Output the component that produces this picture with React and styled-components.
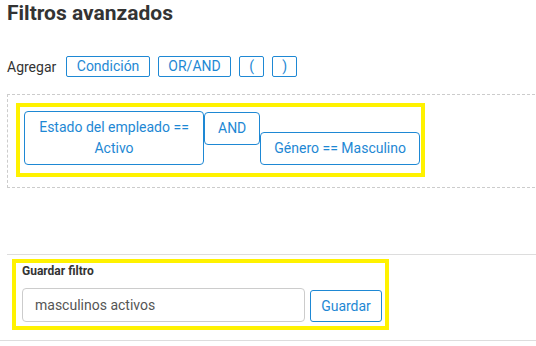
import styled, { createGlobalStyle } from "styled-components";

const GlobalStyle = createGlobalStyle`
  html, body {
    margin: 0;
    padding: 0;
    overflow: hidden;
    background: #fff;
  }
  body {
    font-family: Roboto, "Liberation Sans", Arial, sans-serif;
    color: #333;
  }
`;

const BLUE = "#1e88d4";
const YELLOW = "#fff200";

const Page = styled.div`
  width: 560px;
  border-bottom: 1px solid #ddd;
`;

const Body = styled.div`
  padding-left: 7px;
`;

const Title = styled.h1`
  margin: 0;
  padding-top: 1px;
  font-size: 21px;
  line-height: 24px;
  font-weight: 700;
  color: #333;
`;

const Toolbar = styled.div`
  display: flex;
  align-items: center;
  gap: 8px;
  margin-top: 31px;
`;

const Label = styled.span`
  font-size: 14px;
  margin-right: 2px;
  color: #333;
`;

const AddButton = styled.button`
  font-family: inherit;
  font-size: 14px;
  line-height: 19px;
  height: 21px;
  padding: 0 ${({ $narrow }) => ($narrow ? "8px" : "9.5px")};
  min-width: ${({ $narrow }) => ($narrow ? "25px" : "auto")};
  background: #fff;
  color: ${BLUE};
  border: 1px solid ${BLUE};
  border-radius: 2px;
  cursor: pointer;
`;

const Canvas = styled.div`
  margin-top: 17px;
  border: 1px dashed #ccc;
  border-right: none;
  padding: 8px 8px 10px 8px;
`;

const Highlight = styled.div`
  display: inline-flex;
  border: 4px solid ${YELLOW};
  box-sizing: border-box;
`;

const Expression = styled(Highlight)`
  align-items: flex-end;
  padding: 4px 1px 8px 4px;
`;

const Chip = styled.div`
  box-sizing: border-box;
  width: ${({ $width }) => ($width ? `${$width}px` : "auto")};
  padding: ${({ $tall }) => ($tall ? "5px 12px" : "6px 13px")};
  font-size: 14px;
  line-height: ${({ $tall }) => ($tall ? "21px" : "19px")};
  text-align: center;
  color: ${BLUE};
  border: 1px solid ${BLUE};
  border-radius: 4px;
  background: #fff;
  align-self: ${({ $top }) => ($top ? "flex-start" : "auto")};
  margin-top: ${({ $top }) => ($top ? "1px" : "0")};
`;

const SaveSection = styled.div`
  margin-top: 66px;
  border-top: 1px solid #ddd;
  padding: 4px 0 10px 5px;
`;

const SaveBox = styled(Highlight)`
  flex-direction: column;
  padding: 0 3px 4px 6px;
`;

const SaveLabel = styled.div`
  font-size: 12px;
  line-height: 16px;
  font-weight: 700;
  color: #333;
`;

const SaveRow = styled.div`
  display: flex;
  align-items: flex-end;
  gap: 5px;
  margin-top: 9px;
`;

const NameInput = styled.input`
  box-sizing: border-box;
  width: 283px;
  height: 34px;
  padding: 0 12px;
  font-family: inherit;
  font-size: 14px;
  color: #555;
  border: 1px solid #ccc;
  border-radius: 4px;
  outline: none;
`;

const SaveButton = styled.button`
  box-sizing: border-box;
  width: 72px;
  height: 32px;
  font-family: inherit;
  font-size: 14px;
  color: ${BLUE};
  background: #fff;
  border: 1px solid ${BLUE};
  border-radius: 3px;
  cursor: pointer;
`;

export default function App() {
  return (
    <>
      <GlobalStyle />
      <Page>
        <Body>
          <Title>Filtros avanzados</Title>
          <Toolbar>
            <Label>Agregar</Label>
            <AddButton>Condición</AddButton>
            <AddButton>OR/AND</AddButton>
            <AddButton $narrow>(</AddButton>
            <AddButton $narrow>)</AddButton>
          </Toolbar>
          <Canvas>
            <Expression>
              <Chip $tall $width={180}>
                Estado del empleado == Activo
              </Chip>
              <Chip $top>AND</Chip>
              <Chip>Género == Masculino</Chip>
            </Expression>
          </Canvas>
          <SaveSection>
            <SaveBox>
              <SaveLabel>Guardar filtro</SaveLabel>
              <SaveRow>
                <NameInput defaultValue="masculinos activos" />
                <SaveButton>Guardar</SaveButton>
              </SaveRow>
            </SaveBox>
          </SaveSection>
        </Body>
      </Page>
    </>
  );
}
